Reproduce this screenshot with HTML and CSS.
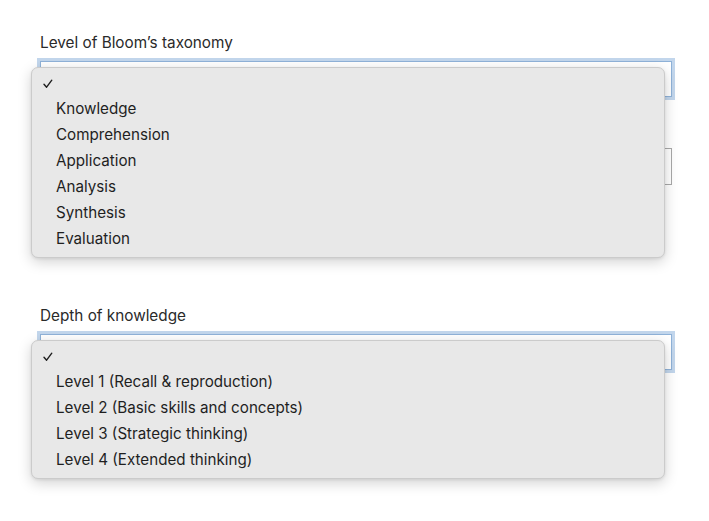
FILE: index.html
```html
<!DOCTYPE html>
<html>
<head>
<meta charset="utf-8">
<link rel="stylesheet" href="styles.css">
</head>
<body>
<div class="page">
  <div class="field field-first">
    <label class="label">Level of Bloom’s taxonomy</label>
    <div class="select focused"></div>
    <ul class="menu">
      <li class="item checked"><svg class="check" width="10" height="10" viewBox="0 0 10 10"><path d="M1 5.2 L3.6 8.2 L8.8 1.2" fill="none" stroke="#1f1f1f" stroke-width="1.4" stroke-linecap="round" stroke-linejoin="round"/></svg></li>
      <li class="item">Knowledge</li>
      <li class="item">Comprehension</li>
      <li class="item">Application</li>
      <li class="item">Analysis</li>
      <li class="item">Synthesis</li>
      <li class="item">Evaluation</li>
    </ul>
  </div>
  <div class="field field-second">
    <label class="label"></label>
    <div class="select"></div>
  </div>
  <div class="field field-third">
    <label class="label">Depth of knowledge</label>
    <div class="select focused"></div>
    <ul class="menu">
      <li class="item checked"><svg class="check" width="10" height="10" viewBox="0 0 10 10"><path d="M1 5.2 L3.6 8.2 L8.8 1.2" fill="none" stroke="#1f1f1f" stroke-width="1.4" stroke-linecap="round" stroke-linejoin="round"/></svg></li>
      <li class="item">Level 1 (Recall &amp; reproduction)</li>
      <li class="item">Level 2 (Basic skills and concepts)</li>
      <li class="item">Level 3 (Strategic thinking)</li>
      <li class="item">Level 4 (Extended thinking)</li>
    </ul>
  </div>
</div>
</body>
</html>
```
FILE: styles.css
```css
* { box-sizing: border-box; }
html, body { margin: 0; padding: 0; background: #ffffff; }
body {
  min-height: 521px;
  font-family: Inter, "Liberation Sans", Arial, sans-serif;
  font-size: 15px;
  color: #222222;
}
.page {
  width: 709px;
  min-height: 521px;
  padding: 34px 37px 0 40px;
}
.field {
  position: relative;
}
.field-second { margin-top: 24px; }
.field-third { margin-top: 122px; }
.label {
  display: block;
  height: 18px;
  line-height: 18px;
  font-size: 15.3px;
  color: #2a2a2a;
  margin-bottom: 9px;
}
.select {
  height: 37px;
  background: #ffffff;
  border: 1px solid #a9a9a9;
}
.select.focused {
  height: 36px;
  border: 1px solid #8fb2d8;
  box-shadow: 0 0 0 3px #c2d6ec;
}
.menu {
  position: absolute;
  z-index: 10;
  left: -9px;
  top: 33px;
  width: 634px;
  margin: 0;
  padding: 2px 0 5px;
  list-style: none;
  background: #e8e8e8;
  border: 1px solid #cbcbcb;
  border-radius: 7px;
  box-shadow: 0 4px 14px rgba(0, 0, 0, 0.18), 0 1px 3px rgba(0, 0, 0, 0.08);
}
.item {
  height: 26px;
  line-height: 26px;
  padding-left: 24px;
  font-size: 15.2px;
  color: #1f1f1f;
  white-space: nowrap;
}
.item.checked {
  display: flex;
  align-items: center;
  padding-left: 11px;
}
.check {
  display: block;
  margin-top: 1px;
}
```
